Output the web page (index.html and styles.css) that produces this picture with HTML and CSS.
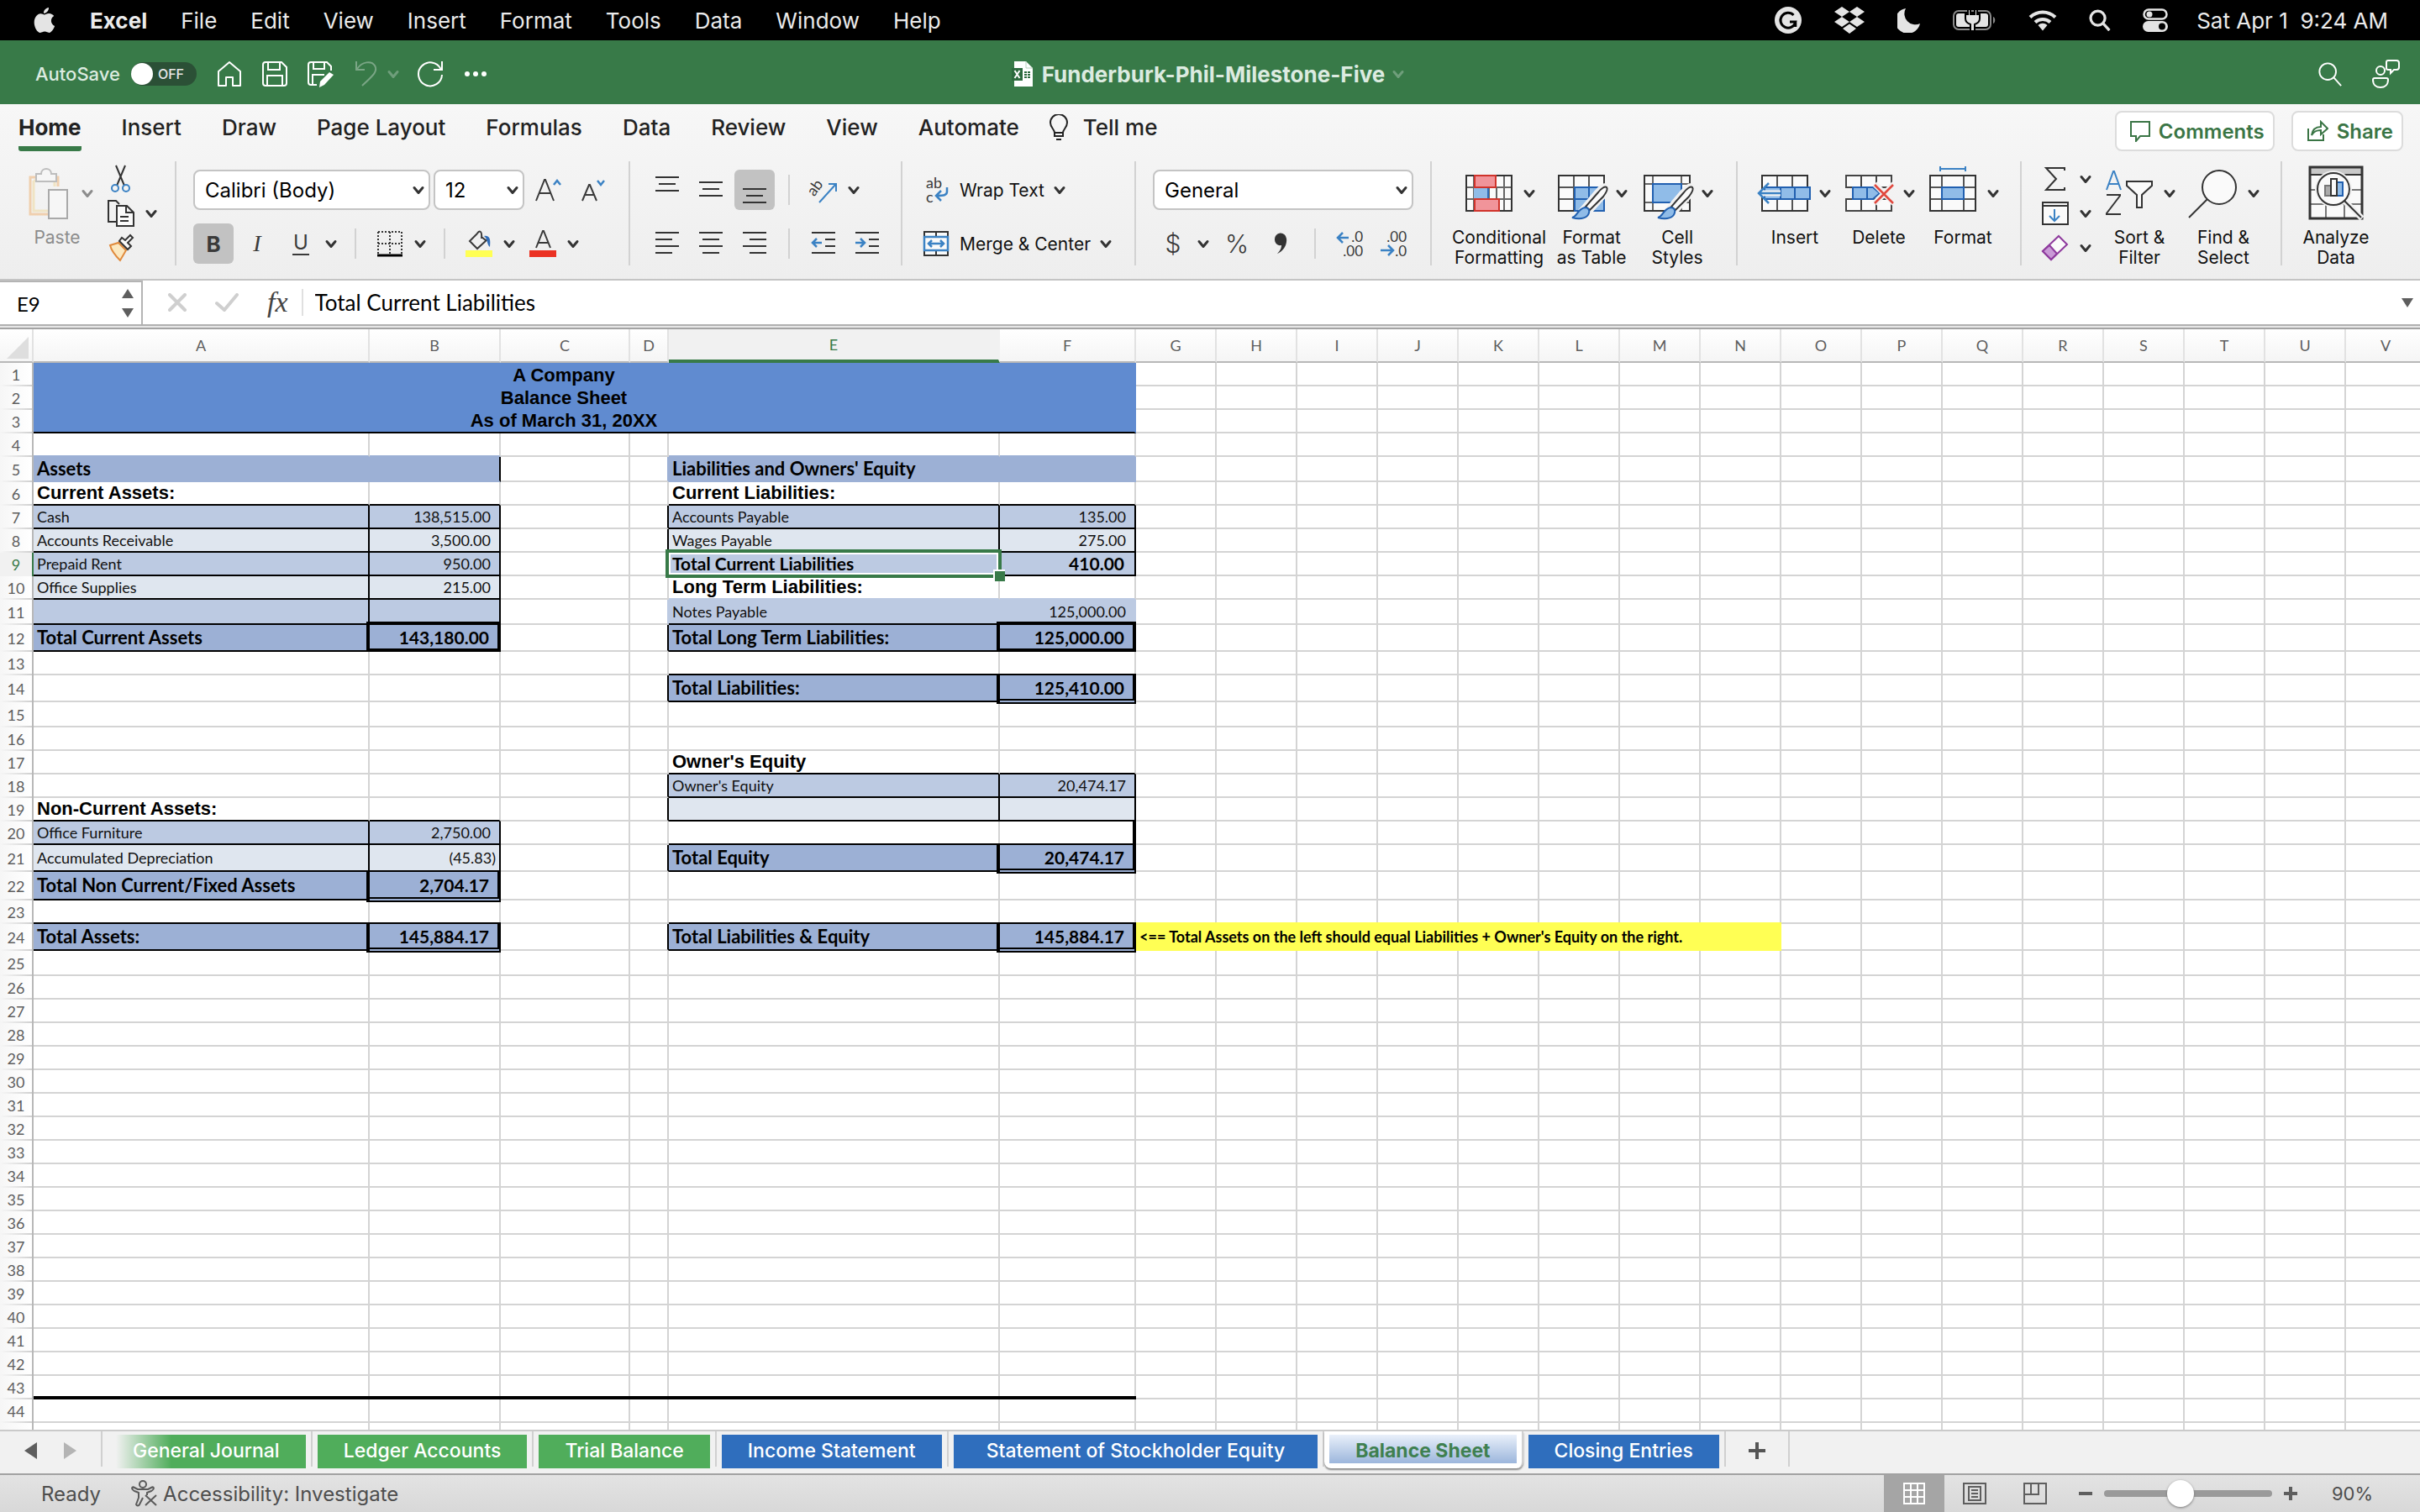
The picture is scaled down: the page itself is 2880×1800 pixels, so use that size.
FILE: index.html
```html
<!DOCTYPE html>
<html lang="en">
<head>
<meta charset="utf-8">
<title>Funderburk-Phil-Milestone-Five</title>
<link rel="stylesheet" href="styles.css">
</head>
<body>
<svg class="defs" aria-hidden="true">
  <symbol id="chev" viewBox="0 0 24 24"><path d="M7 9.500l5 6 5-6" fill="none" stroke="currentColor" stroke-width="3" stroke-linecap="round" stroke-linejoin="round"/></symbol>
  <symbol id="lens" viewBox="0 0 32 32"><circle cx="13" cy="13" r="10.500" fill="none" stroke="currentColor"/><path d="M20.500 20.500L30 31" fill="none" stroke="currentColor"/></symbol>
</svg>

<header class="menubar">
  <button class="plain apple" aria-label="Apple menu"><svg width="26" height="32" viewBox="0 0 26 32"><path fill="#e4e4e4" d="M18 1c.3 3.500-2.800 7-6 6.800C11.600 4.600 14.800 1.200 18 1zM12.800 9.400c1.200 0 3-1.600 5.600-1.500 2.300.1 4.500 1.200 5.800 3.200-4.900 3-4.100 9.800.9 11.900-1 2.900-3.700 7.800-6.600 7.900-2.100 0-2.800-1.300-5.300-1.300-2.400 0-3.300 1.300-5.200 1.300C4.500 31 .7 24.600.7 18.700c0-6.200 3.900-10.500 7.600-10.500 2.100 0 3.500 1.200 4.500 1.200z"/></svg></button>
  <nav class="menus">
    <a href="#" class="app">Excel</a><a href="#">File</a><a href="#">Edit</a><a href="#">View</a><a href="#">Insert</a><a href="#">Format</a><a href="#">Tools</a><a href="#">Data</a><a href="#">Window</a><a href="#">Help</a>
  </nav>
  <div class="status-icons">
    <svg width="32" height="32" viewBox="0 0 32 32"><circle cx="16" cy="16" r="16" fill="#e4e4e4"/><path d="M22.500 10A9 9 0 1 0 24.800 18H18M24.800 17.500V24" fill="none" stroke="#000" stroke-width="3"/></svg>
    <svg width="38" height="34" viewBox="0 0 38 34"><path fill="#e4e4e4" d="M10 1l9 6-9 6-9-6zM28 1l9 6-9 6-9-6zM10 13l9 6-9 6-9-6zM28 13l9 6-9 6-9-6zM19 21.500l8 5.500-8 6-8-6z"/></svg>
    <svg width="28" height="30" viewBox="0 0 28 30"><path fill="#e4e4e4" d="M10 1A15 15 0 1 0 27 19 13 13 0 0 1 10 1z"/></svg>
    <svg width="52" height="26" viewBox="0 0 52 26"><rect x="1" y="2" width="44" height="22" rx="6" fill="none" stroke="#8a8a8a" stroke-width="2"/><rect x="4" y="5" width="38" height="16" rx="3" fill="#e4e4e4"/><path d="M48 9c3 1 3 7 0 8z" fill="#8a8a8a"/><path d="M18 0h3v6h5V0h3v6h3v5c0 4-3 6-6 7v8h-5v-8c-3-1-6-3-6-7V6h3z" fill="#e4e4e4" stroke="#000" stroke-width="2"/></svg>
    <svg width="34" height="26" viewBox="0 0 34 26"><g fill="none" stroke="#e4e4e4" stroke-width="4"><path d="M2 9.500a21.500 21.500 0 0 1 30 0"/><path d="M8 15.500a13 13 0 0 1 18 0"/></g><path fill="#e4e4e4" d="M11.500 19a8 8 0 0 1 11 0L17 25.500z"/></svg>
    <svg class="lens-menu" width="26" height="26"><use href="#lens"/></svg>
    <svg width="30" height="28" viewBox="0 0 30 28"><rect x="1.500" y="1.500" width="27" height="11" rx="5.500" fill="none" stroke="#e4e4e4" stroke-width="2.500"/><circle cx="8" cy="7" r="3.500" fill="#e4e4e4"/><rect x="0" y="15" width="30" height="13" rx="6.500" fill="#e4e4e4"/><circle cx="23" cy="21.500" r="4" fill="#000"/></svg>
  </div>
  <time class="clock">Sat Apr 1  9:24 AM</time>
</header>

<div class="titlebar">
  <div class="quick">
    <label class="autosave">AutoSave <input type="checkbox" role="switch" class="switch-input"><span class="switch"><span class="knob"></span>OFF</span></label>
    <button class="plain" aria-label="Home"><svg width="30" height="32" viewBox="0 0 30 32"><path d="M2 13L15 2l13 11v17h-9V20h-8v10H2z" fill="none" stroke="#fff" stroke-width="2" stroke-linejoin="round"/></svg></button>
    <button class="plain" aria-label="Save"><svg width="30" height="30" viewBox="0 0 30 30"><path d="M4 1h19l6 6v19a3 3 0 0 1-3 3H4a3 3 0 0 1-3-3V4a3 3 0 0 1 3-3zM7 1v9h14V1M6 29V17h18v12" fill="none" stroke="#fff" stroke-width="2"/></svg></button>
    <button class="plain" aria-label="Save as"><svg width="32" height="32" viewBox="0 0 32 32"><path d="M11 29H4a3 3 0 0 1-3-3V5a3 3 0 0 1 3-3h19l5 5v5M7 2v8h13V2M6 29V17h14" fill="none" stroke="#fff" stroke-width="2"/><path d="M26 14l5 3-11 12-6 3 1-7z" fill="#fff"/></svg></button>
    <button class="plain dim" aria-label="Undo"><svg width="28" height="32" viewBox="0 0 28 32"><path d="M2 1v10h10M3 10C9 1 20 0 24 6c4 7-2 12-15 24" fill="none" stroke="currentColor" stroke-width="2"/></svg></button>
    <button class="plain dim tight" aria-label="Undo list"><svg class="chev"><use href="#chev"/></svg></button>
    <button class="plain" aria-label="Redo"><svg width="32" height="32" viewBox="0 0 32 32"><path d="M30 1v10H20M28.500 10A14 14 0 1 0 30 17" fill="none" stroke="#fff" stroke-width="2"/></svg></button>
    <button class="plain" aria-label="More"><svg width="28" height="8" viewBox="0 0 28 8"><g fill="#fff"><circle cx="4" cy="4" r="3"/><circle cx="14" cy="4" r="3"/><circle cx="24" cy="4" r="3"/></g></svg></button>
  </div>
  <div class="doc">
    <svg width="26" height="30" viewBox="0 0 26 30"><path d="M3 0h14l8 8v22H3z" fill="#fff"/><path d="M17 0v8h8" fill="none" stroke="#b9d2bf"/><path d="M0 8h13v15H0z" fill="#2c6a3e"/><path d="M3.500 11l6 9M9.500 11l-6 9" stroke="#fff" stroke-width="2"/><path d="M15 12h3v2h-3zM19 12h3v2h-3zM15 15h3v2h-3zM19 15h3v2h-3zM15 18h3v2h-3zM19 18h3v2h-3z" fill="#2c6a3e"/></svg>
    <h1>Funderburk-Phil-Milestone-Five</h1>
    <svg class="chev dim"><use href="#chev"/></svg>
  </div>
  <div class="account">
    <button class="plain" aria-label="Search"><svg class="lens-title" width="30" height="30"><use href="#lens"/></svg></button>
    <button class="plain" aria-label="Collaborate"><svg width="34" height="34" viewBox="0 0 34 34"><g fill="none" stroke="#fff" stroke-width="2"><circle cx="11" cy="13" r="5"/><path d="M4 22h14a2 2 0 0 1 2 2c0 6-4 9-9 9s-9-3-9-9a2 2 0 0 1 2-2z"/><path d="M20 1h10a3 3 0 0 1 3 3v5a3 3 0 0 1-3 3h-3l-4 4v-4h-3a2 2 0 0 1-2-2V3a2 2 0 0 1 2-2z"/></g></svg></button>
  </div>
</div>

<section class="ribbon">
  <div class="tabrow">
    <nav class="tabs">
      <a href="#" class="on">Home</a><a href="#">Insert</a><a href="#">Draw</a><a href="#">Page Layout</a><a href="#">Formulas</a><a href="#">Data</a><a href="#">Review</a><a href="#">View</a><a href="#">Automate</a>
      <a href="#" class="tell"><svg width="22" height="32" viewBox="0 0 22 32"><path d="M6 22c0-4-5-6-5-12a10 10 0 0 1 20 0c0 6-5 8-5 12zM6 22v4h10v-4M8 30h6" fill="none" stroke="#222" stroke-width="2"/></svg>Tell me</a>
    </nav>
    <button class="pill"><svg width="24" height="26" viewBox="0 0 24 26"><path d="M1 2h22v17H12l-5 6v-6H1z" fill="none" stroke="#3a7545" stroke-width="2"/></svg>Comments</button>
    <button class="pill"><svg width="26" height="26" viewBox="0 0 26 26"><path d="M2 10v14h18v-7M6 18c1-7 5-10 11-10V2l8 8-8 7v-5c-5 0-8 1-11 6z" fill="none" stroke="#3a7545" stroke-width="2"/></svg>Share</button>
  </div>

  <div class="tools">
    <div class="group clip">
      <button class="big off"><span class="pic"><svg class="ico72" viewBox="0 0 72 72"><path d="M49 28V17H16v44h22" fill="none" stroke="#f0cfae" stroke-width="3"/><path d="M20 21h25v7M20 21v36h18" fill="none" stroke="#f0e4c4" stroke-width="3"/><path d="M23 22v-9h6c0-8 12-8 12 0h6v9z" fill="#f6f6f6" stroke="#bdbdbd" stroke-width="2"/><path d="M38 32h22v34H38z" fill="#f6f6f6" stroke="#a9a9a9" stroke-width="2"/></svg><svg class="chev"><use href="#chev"/></svg></span>Paste</button>
      <div class="stack">
        <button class="tool" aria-label="Cut"><svg class="ico" viewBox="0 0 32 32"><path d="M10 0l10 24M21 0L11 24" fill="none" stroke="#333" stroke-width="2"/><circle cx="9" cy="27" r="4" fill="none" stroke="#3b82c4" stroke-width="2"/><circle cx="22" cy="27" r="4" fill="none" stroke="#3b82c4" stroke-width="2"/></svg></button>
        <button class="tool split" aria-label="Copy"><svg class="ico" viewBox="0 0 32 32"><path d="M10 26H1V1h9l4 4" fill="none" stroke="#333" stroke-width="2"/><path d="M11 7h12l8 8v16H11zM22 7v8h9M15 20h10M15 25h10" fill="#fafafa" stroke="#333" stroke-width="2"/></svg><svg class="chev"><use href="#chev"/></svg></button>
        <button class="tool" aria-label="Format painter"><svg class="ico" viewBox="0 0 32 32"><path d="M3 13l10-3 9 9-7 12C11 27 5 21 3 13z" fill="#fbe8c0" stroke="#e08a3c" stroke-width="2"/><path d="M14 8l10 10 4-4-4-4 6-6-3-3-6 6-4-3z" fill="#fafafa" stroke="#333" stroke-width="2"/></svg></button>
      </div>
    </div>

    <div class="group rows">
      <div class="row">
        <label class="pick wide"><select aria-label="Font"><option>Calibri (Body)</option></select><svg class="chev"><use href="#chev"/></svg></label>
        <label class="pick size"><select aria-label="Font size"><option>12</option></select><svg class="chev"><use href="#chev"/></svg></label>
        <button class="tool" aria-label="Increase font size"><svg class="ico" viewBox="0 0 32 32"><path d="M2 29L12 4h1l10 25M6 20h13" fill="none" stroke="#3a3a3a" stroke-width="2"/><path d="M23 10l4-5 4 5" fill="none" stroke="#3b82c4" stroke-width="2.500"/></svg></button>
        <button class="tool" aria-label="Decrease font size"><svg class="ico" viewBox="0 0 32 32"><path d="M5 29l8-19h1l8 19M8 22h11" fill="none" stroke="#3a3a3a" stroke-width="2"/><path d="M23 5l4 5 4-5" fill="none" stroke="#3b82c4" stroke-width="2.500"/></svg></button>
      </div>
      <div class="row">
        <button class="tool on bold">B</button>
        <button class="tool ital">I</button>
        <button class="tool split under"><span class="glyph">U</span><svg class="chev"><use href="#chev"/></svg></button>
        <i class="sep"></i>
        <button class="tool split" aria-label="Borders"><svg class="ico" viewBox="0 0 32 32"><path d="M2 2h28M2 16h28M2 2v26M16 2v26M30 2v26" fill="none" stroke="#333" stroke-width="2" stroke-dasharray="2 2"/><path d="M1 30h30" stroke="#000" stroke-width="3"/></svg><svg class="chev"><use href="#chev"/></svg></button>
        <i class="sep"></i>
        <button class="tool split" aria-label="Fill colour"><svg class="ico" viewBox="0 0 32 32"><path d="M14 4L5 13l9 9 12-11M14 4c2-4 6-4 5 6M19 8l5 4" fill="none" stroke="#3a3a3a" stroke-width="2"/><path d="M22 7c7-1 8 4 7 13-4-3-2-9-7-13z" fill="#2f6cb8"/><path d="M0 24h32v8H0z" fill="#ffff54"/></svg><svg class="chev"><use href="#chev"/></svg></button>
        <button class="tool split" aria-label="Font colour"><svg class="ico" viewBox="0 0 32 32"><path d="M8 21L16 1h1l8 20M11 15h11" fill="none" stroke="#3a3a3a" stroke-width="2"/><path d="M0 24h32v8H0z" fill="#eb3223"/></svg><svg class="chev"><use href="#chev"/></svg></button>
      </div>
    </div>

    <div class="group rows">
      <div class="row">
        <button class="tool" aria-label="Top align"><svg class="ico" viewBox="0 0 32 32"><path d="M2 1h28M6 9h20M2 17h28" stroke="#333" stroke-width="2"/></svg></button>
        <button class="tool" aria-label="Middle align"><svg class="ico" viewBox="0 0 32 32"><path d="M2 7h28M6 15h20M2 23h28" stroke="#333" stroke-width="2"/></svg></button>
        <button class="tool on" aria-label="Bottom align"><svg class="ico" viewBox="0 0 32 32"><path d="M2 15h28M6 23h20M2 31h28" stroke="#333" stroke-width="2"/></svg></button>
        <i class="sep"></i>
        <button class="tool split" aria-label="Orientation"><svg class="ico" viewBox="0 0 32 32"><text x="0" y="21" transform="rotate(-54 6 18)" class="ab">ab</text><path d="M11 31L30 10M22 9h9v9" fill="none" stroke="#3b82c4" stroke-width="2"/></svg><svg class="chev"><use href="#chev"/></svg></button>
      </div>
      <div class="row">
        <button class="tool" aria-label="Align left"><svg class="ico" viewBox="0 0 32 32"><path d="M2 3h28M2 11h20M2 19h28M2 27h20" stroke="#333" stroke-width="2"/></svg></button>
        <button class="tool" aria-label="Centre"><svg class="ico" viewBox="0 0 32 32"><path d="M2 3h28M6 11h20M2 19h28M6 27h20" stroke="#333" stroke-width="2"/></svg></button>
        <button class="tool" aria-label="Align right"><svg class="ico" viewBox="0 0 32 32"><path d="M2 3h28M10 11h20M2 19h28M10 27h20" stroke="#333" stroke-width="2"/></svg></button>
        <i class="sep"></i>
        <button class="tool" aria-label="Decrease indent"><svg class="ico" viewBox="0 0 32 32"><path d="M2 3h28M18 11h12M18 19h12M2 27h28" stroke="#333" stroke-width="2"/><path d="M14 15H3M8 10l-5 5 5 5" fill="none" stroke="#3b82c4" stroke-width="2.500"/></svg></button>
        <button class="tool" aria-label="Increase indent"><svg class="ico" viewBox="0 0 32 32"><path d="M2 3h28M18 11h12M18 19h12M2 27h28" stroke="#333" stroke-width="2"/><path d="M2 15h11M8 10l5 5-5 5" fill="none" stroke="#3b82c4" stroke-width="2.500"/></svg></button>
      </div>
    </div>

    <div class="group rows">
      <div class="row">
        <button class="tool text"><svg class="ico" viewBox="0 0 32 32"><text x="4" y="14" class="ab">ab</text><text x="4" y="31" class="ab">c</text><path d="M29 13v5c0 4-3 5-12 5M22 17l-6 6 6 6" fill="none" stroke="#3b82c4" stroke-width="2.500"/></svg>Wrap Text<svg class="chev"><use href="#chev"/></svg></button>
      </div>
      <div class="row">
        <button class="tool text"><svg class="ico" viewBox="0 0 32 32"><path d="M2 2h28v28H2zM16 2v6M16 24v6" fill="#fafafa" stroke="#333" stroke-width="2"/><path d="M2 8h28v16H2zM7 16h18M11 12l-4 4 4 4M21 12l4 4-4 4" fill="#fafafa" stroke="#3b82c4" stroke-width="2.500"/></svg>Merge &amp; Center<svg class="chev"><use href="#chev"/></svg></button>
      </div>
    </div>

    <div class="group rows">
      <div class="row">
        <label class="pick number"><select aria-label="Number format"><option>General</option></select><svg class="chev"><use href="#chev"/></svg></label>
      </div>
      <div class="row">
        <button class="tool split sym"><span class="glyph">$</span><svg class="chev"><use href="#chev"/></svg></button>
        <button class="tool sym">%</button>
        <button class="tool" aria-label="Comma style"><svg class="ico" viewBox="0 0 32 32"><path d="M9 11a7 7 0 0 1 14-1c1 8-4 15-11 18 4-4 5-7 5-10-5 1-8-3-8-7z" fill="#333"/></svg></button>
        <i class="sep"></i>
        <button class="tool" aria-label="Increase decimal"><svg class="ico" viewBox="0 0 32 32"><text x="32" y="14" class="dec">.0</text><text x="32" y="31" class="dec">.00</text><path d="M15 9H2M8 3L2 9l6 6" fill="none" stroke="#3b82c4" stroke-width="2.500"/></svg></button>
        <button class="tool" aria-label="Decrease decimal"><svg class="ico" viewBox="0 0 32 32"><text x="32" y="14" class="dec">.00</text><text x="32" y="31" class="dec">.0</text><path d="M1 24h15M10 18l6 6-6 6" fill="none" stroke="#3b82c4" stroke-width="2.500"/></svg></button>
      </div>
    </div>

    <div class="group styles">
      <button class="big"><span class="pic"><svg class="ico72" viewBox="0 0 72 72"><path d="M9 15h54v42H9zM18 15v42M54 15v42M36 29v14M45 29v14M9 29h54M9 43h54" fill="#fafafa" stroke="#666" stroke-width="2"/><path d="M9 15h54v42H9z" fill="none" stroke="#333" stroke-width="2"/><path d="M18 29h17v14H18z" fill="#90bce8"/><path d="M35 29v14" stroke="#2f6cb8" stroke-width="2"/><path d="M19 15h25v14H19zM19 43h29v14H19z" fill="#f1949a" stroke="#d0332b" stroke-width="2"/></svg><svg class="chev"><use href="#chev"/></svg></span>Conditional<br>Formatting</button>
      <button class="big"><span class="pic"><svg class="ico72" viewBox="0 0 72 72"><path d="M9 15h54v42H9zM27 15v42M45 15v42M9 29h54M9 43h54" fill="#fafafa" stroke="#555" stroke-width="2"/><path d="M9 15h54v42H9z" fill="none" stroke="#333" stroke-width="2"/><path d="M28 29h35v28H28zM45 29v28M28 43h35" fill="#90bce8" stroke="#2160b0" stroke-width="2"/><path d="M65 27c4 2 1 8-3 13L45 59l-8-4 17-20c4-5 8-8 11-8z" fill="#fafafa" stroke="#f2f2f2" stroke-width="6"/><path d="M66 29c2 2-1 7-4 11L46 56l-5-4 15-17c3-4 8-8 10-6z" fill="#fafafa" stroke="#333" stroke-width="2"/><path d="M40 53c4 0 6 3 5 6-1 6-9 9-20 6 6-1 6-10 15-12z" fill="#90bce8" stroke="#2160b0" stroke-width="2"/></svg><svg class="chev"><use href="#chev"/></svg></span>Format<br>as Table</button>
      <button class="big"><span class="pic"><svg class="ico72" viewBox="0 0 72 72"><path d="M9 15h54v42H9zM19 15v42M53 15v42M9 25h54M9 47h54" fill="#fafafa" stroke="#666" stroke-width="2"/><path d="M9 15h54v42H9z" fill="none" stroke="#333" stroke-width="2"/><path d="M19 25h34v22H19z" fill="#90bce8" stroke="#2160b0" stroke-width="2"/><path d="M65 27c4 2 1 8-3 13L45 59l-8-4 17-20c4-5 8-8 11-8z" fill="#fafafa" stroke="#f2f2f2" stroke-width="6"/><path d="M66 29c2 2-1 7-4 11L46 56l-5-4 15-17c3-4 8-8 10-6z" fill="#fafafa" stroke="#333" stroke-width="2"/><path d="M40 53c4 0 6 3 5 6-1 6-9 9-20 6 6-1 6-10 15-12z" fill="#90bce8" stroke="#2160b0" stroke-width="2"/></svg><svg class="chev"><use href="#chev"/></svg></span>Cell<br>Styles</button>
    </div>

    <div class="group">
      <button class="big"><span class="pic"><svg class="ico72" viewBox="0 0 72 72"><path d="M9 15h54v42H9zM27 15v42M45 15v42" fill="#fafafa" stroke="#555" stroke-width="2"/><path d="M9 15h54v42H9z" fill="none" stroke="#333" stroke-width="2"/><path d="M12 29h54v14H12zM31 29v14M48 29v14" fill="#90bce8" stroke="#2160b0" stroke-width="2"/><path d="M5 36h26" stroke="#f2f2f2" stroke-width="7"/><path d="M5 36h26M17 24L5 36l12 12" fill="none" stroke="#3b82c4" stroke-width="2.500"/></svg><svg class="chev"><use href="#chev"/></svg></span>Insert</button>
      <button class="big"><span class="pic"><svg class="ico72" viewBox="0 0 72 72"><path d="M9 15h54v14H9zM9 43h54v14H9zM27 15v14M45 15v14M27 43v14M45 43v14" fill="#fafafa" stroke="#444" stroke-width="2"/><path d="M17 29h24l8 7-8 7H17zM34 29v14" fill="#90bce8" stroke="#2160b0" stroke-width="2"/><path d="M43 25l23 23M66 25L43 48" stroke="#f2f2f2" stroke-width="7"/><path d="M43 26l22 22M65 26L43 48" stroke="#e0483e" stroke-width="2.500"/></svg><svg class="chev"><use href="#chev"/></svg></span>Delete</button>
      <button class="big"><span class="pic"><svg class="ico72" viewBox="0 0 72 72"><path d="M9 15h54v42H9zM23 15v42M49 15v42M9 29h54M9 43h54" fill="#fafafa" stroke="#555" stroke-width="2"/><path d="M9 15h54v42H9z" fill="none" stroke="#333" stroke-width="2"/><path d="M23 29h26v14H23z" fill="#90bce8" stroke="#2160b0" stroke-width="2"/><path d="M21 4v6M51 4v6M21 7h30" stroke="#3b82c4" stroke-width="2"/></svg><svg class="chev"><use href="#chev"/></svg></span>Format</button>
    </div>

    <div class="group edit">
      <div class="stack">
        <button class="tool split" aria-label="AutoSum"><svg class="ico" viewBox="0 0 32 32"><path d="M27 6V3H5l12 13L5 29h22v-3" fill="none" stroke="#333" stroke-width="2"/></svg><svg class="chev"><use href="#chev"/></svg></button>
        <button class="tool split" aria-label="Fill"><svg class="ico" viewBox="0 0 32 32"><path d="M1 3h30v26H1zM1 7h30" fill="#fafafa" stroke="#333" stroke-width="2"/><path d="M15 11v14M9 19l6 6 6-6" fill="none" stroke="#3b82c4" stroke-width="2"/></svg><svg class="chev"><use href="#chev"/></svg></button>
        <button class="tool split" aria-label="Clear"><svg class="ico" viewBox="0 0 32 32"><path d="M20 2l10 10-19 18L1 20z" fill="#fafafa" stroke="#8e3a9d" stroke-width="2"/><path d="M9 13l9 10-7 7L1 20z" fill="#c99ad6" stroke="#8e3a9d" stroke-width="2"/></svg><svg class="chev"><use href="#chev"/></svg></button>
      </div>
      <button class="big"><span class="pic"><svg class="ico72" viewBox="0 0 72 72"><path d="M9 32l8-22h1l8 22M12 25h11" fill="none" stroke="#3b82c4" stroke-width="2"/><path d="M9 38h16v1L9 60v1h17" fill="none" stroke="#333" stroke-width="2"/><path d="M33 22h30v5L51 38v15h-6V38L33 27z" fill="#fafafa" stroke="#333" stroke-width="2"/></svg><svg class="chev"><use href="#chev"/></svg></span>Sort &amp;<br>Filter</button>
      <button class="big"><span class="pic"><svg class="ico72" viewBox="0 0 72 72"><circle cx="43" cy="29" r="20" fill="#fafafa" stroke="#333" stroke-width="2"/><path d="M29 43L7 65" stroke="#333" stroke-width="2"/></svg><svg class="chev"><use href="#chev"/></svg></span>Find &amp;<br>Select</button>
    </div>

    <div class="group edit">
      <button class="big"><span class="pic"><svg class="ico72" viewBox="0 0 72 72"><path d="M5 5h62v61H5zM24 14v52M46 14v52M5 32h62M5 49h62" fill="#fafafa" stroke="#777" stroke-width="2"/><path d="M5 5h62v9H5z" fill="#c8c8c8" stroke="#333" stroke-width="2"/><path d="M5 5h62v61H5z" fill="none" stroke="#333" stroke-width="3"/><circle cx="33" cy="31" r="22" fill="#f2f2f2"/><path d="M47 46l20 20" stroke="#f2f2f2" stroke-width="7"/><circle cx="33" cy="31" r="19" fill="#fafafa" stroke="#333" stroke-width="2"/><path d="M46 45l20 20" stroke="#333" stroke-width="2"/><path d="M23 27h7v12h-7z" fill="#ababab" stroke="#777" stroke-width="2"/><path d="M37 23h7v16h-7z" fill="#90bce8" stroke="#2160b0" stroke-width="2"/><path d="M30 19h7v20h-7z" fill="#fafafa" stroke="#333" stroke-width="2"/></svg></span>Analyze<br>Data</button>
    </div>
  </div>
</section>

<div class="formulabar">
  <div class="namebox"><input aria-label="Name box" value="E9"><svg width="16" height="34" viewBox="0 0 16 34"><path d="M1 11L8 0l7 11zM1 23l7 11 7-11z" fill="#5e5e5e"/></svg></div>
  <button class="plain" aria-label="Cancel"><svg width="22" height="22" viewBox="0 0 22 22"><path d="M2 2l18 18M20 2L2 20" stroke="#cfcfcf" stroke-width="4" stroke-linecap="round"/></svg></button>
  <button class="plain" aria-label="Enter"><svg width="28" height="22" viewBox="0 0 28 22"><path d="M2 12l9 8L26 2" fill="none" stroke="#cfcfcf" stroke-width="4" stroke-linecap="round"/></svg></button>
  <button class="plain fx" aria-label="Insert function">fx</button>
  <input class="formula" aria-label="Formula" value="Total Current Liabilities">
  <button class="plain expand" aria-label="Expand formula bar"><svg width="14" height="11" viewBox="0 0 14 11"><path d="M0 0h14L7 11z" fill="#5e5e5e"/></svg></button>
</div>

<main class="sheet">
<table>
<colgroup><col class="c-head"><col class="c-a"><col class="c-b"><col class="c-c"><col class="c-d"><col class="c-e"><col class="c-f"><col class="c-n" span="16"></colgroup>
<thead><tr><th class="corner"><svg width="26" height="26" viewBox="0 0 26 26"><path d="M26 0v26H0z" fill="#dedede"/></svg></th><th>A</th><th>B</th><th>C</th><th>D</th><th class="cur">E</th><th>F</th><th>G</th><th>H</th><th>I</th><th>J</th><th>K</th><th>L</th><th>M</th><th>N</th><th>O</th><th>P</th><th>Q</th><th>R</th><th>S</th><th>T</th><th>U</th><th>V</th></tr></thead>
<tbody>
<tr><th scope="row">1</th><td class="title" colspan="6" rowspan="3">A Company<br>Balance Sheet<br>As of March 31, 20XX</td><td class="rest" colspan="16"></td></tr>
<tr><th scope="row">2</th><td class="rest" colspan="16"></td></tr>
<tr><th scope="row">3</th><td class="rest" colspan="16"></td></tr>
<tr><th scope="row">4</th><td class="bs"></td><td class="bs"></td><td></td><td></td><td class="bs"></td><td class="bs"></td><td class="rest" colspan="16"></td></tr>
<tr class="h30"><th scope="row">5</th><td class="sec bs rk" colspan="2">Assets</td><td></td><td class="rs"></td><td class="sec bs rs" colspan="2">Liabilities and Owners' Equity</td><td class="rest" colspan="16"></td></tr>
<tr><th scope="row">6</th><td class="arial bk">Current Assets:</td><td class="bk"></td><td></td><td></td><td class="arial bk">Current Liabilities:</td><td class="bk"></td><td class="rest" colspan="16"></td></tr>
<tr><th scope="row">7</th><td class="dk box">Cash</td><td class="dk box num">138,515.00</td><td></td><td class="rk"></td><td class="dk box">Accounts Payable</td><td class="dk box num">135.00</td><td class="rest" colspan="16"></td></tr>
<tr><th scope="row">8</th><td class="lt box">Accounts Receivable</td><td class="lt box num">3,500.00</td><td></td><td class="rk"></td><td class="lt box">Wages Payable</td><td class="lt box num">275.00</td><td class="rest" colspan="16"></td></tr>
<tr><th scope="row" class="cur">9</th><td class="dk box">Prepaid Rent</td><td class="dk box num">950.00</td><td></td><td class="rk"></td><td class="dk box strong active">Total Current Liabilities</td><td class="dk box num strong">410.00</td><td class="rest" colspan="16"></td></tr>
<tr><th scope="row">10</th><td class="lt box">Office Supplies</td><td class="lt box num">215.00</td><td></td><td></td><td class="arial bd">Long Term Liabilities:</td><td class="bd"></td><td class="rest" colspan="16"></td></tr>
<tr class="h30"><th scope="row">11</th><td class="dk box"></td><td class="dk box"></td><td></td><td class="rd"></td><td class="dk bk rd">Notes Payable</td><td class="dk bk rd num">125,000.00</td><td class="rest" colspan="16"></td></tr>
<tr class="h32"><th scope="row">12</th><td class="sec box">Total Current Assets</td><td class="sec box num thick">143,180.00</td><td></td><td class="rk"></td><td class="sec box">Total Long Term Liabilities:</td><td class="sec box num thick">125,000.00</td><td class="rest" colspan="16"></td></tr>
<tr><th scope="row">13</th><td></td><td></td><td></td><td></td><td class="bk"></td><td class="bk"></td><td class="rest" colspan="16"></td></tr>
<tr class="h32"><th scope="row">14</th><td></td><td></td><td></td><td class="rk"></td><td class="sec box">Total Liabilities:</td><td class="sec num dbl">125,410.00</td><td class="rest" colspan="16"></td></tr>
<tr class="h30"><th scope="row">15</th><td></td><td></td><td></td><td></td><td></td><td></td><td class="rest" colspan="16"></td></tr>
<tr><th scope="row">16</th><td></td><td></td><td></td><td></td><td></td><td></td><td class="rest" colspan="16"></td></tr>
<tr><th scope="row">17</th><td></td><td></td><td></td><td></td><td class="arial bk">Owner's Equity</td><td class="bk"></td><td class="rest" colspan="16"></td></tr>
<tr><th scope="row">18</th><td></td><td></td><td></td><td class="rk"></td><td class="dk box">Owner's Equity</td><td class="dk box num">20,474.17</td><td class="rest" colspan="16"></td></tr>
<tr><th scope="row">19</th><td class="arial bk">Non-Current Assets:</td><td class="bk"></td><td></td><td class="rk"></td><td class="lt box"></td><td class="lt box"></td><td class="rest" colspan="16"></td></tr>
<tr><th scope="row">20</th><td class="dk box">Office Furniture</td><td class="dk box num">2,750.00</td><td></td><td></td><td class="bk"></td><td class="bk rk rthick"></td><td class="rest" colspan="16"></td></tr>
<tr class="h32"><th scope="row">21</th><td class="lt box">Accumulated Depreciation</td><td class="lt box num neg">(45.83)</td><td></td><td class="rk"></td><td class="sec box">Total Equity</td><td class="sec num dbl">20,474.17</td><td class="rest" colspan="16"></td></tr>
<tr class="h34"><th scope="row">22</th><td class="sec box">Total Non Current/Fixed Assets</td><td class="sec num dbl">2,704.17</td><td></td><td></td><td></td><td></td><td class="rest" colspan="16"></td></tr>
<tr><th scope="row">23</th><td class="bk"></td><td class="bk"></td><td></td><td></td><td class="bk"></td><td class="bk"></td><td class="rest by" colspan="8"></td><td class="rest" colspan="8"></td></tr>
<tr class="h32"><th scope="row">24</th><td class="sec box">Total Assets:</td><td class="sec num dbl">145,884.17</td><td></td><td class="rk"></td><td class="sec box">Total Liabilities &amp; Equity</td><td class="sec num dbl">145,884.17</td><td class="note" colspan="8">&lt;== Total Assets on the left should equal Liabilities + Owner's Equity on the right.</td><td class="rest" colspan="8"></td></tr>
<tr class="h30"><th scope="row">25</th><td></td><td></td><td></td><td></td><td></td><td></td><td class="rest" colspan="16"></td></tr>
<tr><th scope="row">26</th><td></td><td></td><td></td><td></td><td></td><td></td><td class="rest" colspan="16"></td></tr>
<tr><th scope="row">27</th><td></td><td></td><td></td><td></td><td></td><td></td><td class="rest" colspan="16"></td></tr>
<tr><th scope="row">28</th><td></td><td></td><td></td><td></td><td></td><td></td><td class="rest" colspan="16"></td></tr>
<tr><th scope="row">29</th><td></td><td></td><td></td><td></td><td></td><td></td><td class="rest" colspan="16"></td></tr>
<tr><th scope="row">30</th><td></td><td></td><td></td><td></td><td></td><td></td><td class="rest" colspan="16"></td></tr>
<tr><th scope="row">31</th><td></td><td></td><td></td><td></td><td></td><td></td><td class="rest" colspan="16"></td></tr>
<tr><th scope="row">32</th><td></td><td></td><td></td><td></td><td></td><td></td><td class="rest" colspan="16"></td></tr>
<tr><th scope="row">33</th><td></td><td></td><td></td><td></td><td></td><td></td><td class="rest" colspan="16"></td></tr>
<tr><th scope="row">34</th><td></td><td></td><td></td><td></td><td></td><td></td><td class="rest" colspan="16"></td></tr>
<tr><th scope="row">35</th><td></td><td></td><td></td><td></td><td></td><td></td><td class="rest" colspan="16"></td></tr>
<tr><th scope="row">36</th><td></td><td></td><td></td><td></td><td></td><td></td><td class="rest" colspan="16"></td></tr>
<tr><th scope="row">37</th><td></td><td></td><td></td><td></td><td></td><td></td><td class="rest" colspan="16"></td></tr>
<tr><th scope="row">38</th><td></td><td></td><td></td><td></td><td></td><td></td><td class="rest" colspan="16"></td></tr>
<tr><th scope="row">39</th><td></td><td></td><td></td><td></td><td></td><td></td><td class="rest" colspan="16"></td></tr>
<tr><th scope="row">40</th><td></td><td></td><td></td><td></td><td></td><td></td><td class="rest" colspan="16"></td></tr>
<tr><th scope="row">41</th><td></td><td></td><td></td><td></td><td></td><td></td><td class="rest" colspan="16"></td></tr>
<tr><th scope="row">42</th><td></td><td></td><td></td><td></td><td></td><td></td><td class="rest" colspan="16"></td></tr>
<tr class="endline"><th scope="row">43</th><td></td><td></td><td></td><td></td><td></td><td></td><td class="rest" colspan="16"></td></tr>
<tr><th scope="row">44</th><td></td><td></td><td></td><td></td><td></td><td></td><td class="rest" colspan="16"></td></tr>
<tr><th scope="row">45</th><td></td><td></td><td></td><td></td><td></td><td></td><td class="rest" colspan="16"></td></tr>
</tbody>
</table>
</main>

<nav class="sheets">
  <div class="arrows">
    <button class="plain" aria-label="Previous sheets"><svg width="16" height="20" viewBox="0 0 16 20"><path d="M15 0v20L0 10z" fill="#5e5e5e"/></svg></button>
    <button class="plain" aria-label="Next sheets"><svg width="16" height="20" viewBox="0 0 16 20"><path d="M1 0v20l15-10z" fill="#b4b4b4"/></svg></button>
  </div>
  <a href="#" class="st green first"><span>General Journal</span></a>
  <a href="#" class="st green"><span>Ledger Accounts</span></a>
  <a href="#" class="st green"><span>Trial Balance</span></a>
  <a href="#" class="st blue"><span>Income Statement</span></a>
  <a href="#" class="st blue long"><span>Statement of Stockholder Equity</span></a>
  <a href="#" class="st current"><span>Balance Sheet</span></a>
  <a href="#" class="st blue"><span>Closing Entries</span></a>
  <button class="plain add" aria-label="New sheet"><svg width="20" height="20" viewBox="0 0 20 20"><path d="M0 10h20M10 0v20" stroke="#555" stroke-width="4"/></svg></button>
</nav>

<footer class="statusbar">
  <span class="ready">Ready</span>
  <button class="plain access"><svg width="32" height="32" viewBox="0 0 32 32"><g fill="none" stroke="#5a5a5a" stroke-width="2" stroke-linejoin="round"><circle cx="14" cy="5" r="4"/><path d="M2 8c-2 2 0 4 2 5l5 2v6L6 29c1 2 3 2 4 0l4-8M26 8c2 2 0 4-2 5l-5 2v3M2 8l6 3h12l6-3"/><path d="M17 18l13 12M30 18L17 30"/></g></svg>Accessibility: Investigate</button>
  <div class="views">
    <button class="view on" aria-label="Normal"><svg width="28" height="28" viewBox="0 0 28 28"><path d="M2 2h24v24H2zM10 2v24M18 2v24M2 10h24M2 18h24" fill="none" stroke="#fff" stroke-width="2"/></svg></button>
    <button class="view" aria-label="Page layout"><svg width="28" height="28" viewBox="0 0 28 28"><path d="M1 2h26v24H1zM7 6h14v16H7zM10 10h8M10 14h8M10 18h8" fill="none" stroke="#5e5e5e" stroke-width="2"/></svg></button>
    <button class="view" aria-label="Page break preview"><svg width="28" height="28" viewBox="0 0 28 28"><path d="M1 2h26v24H1zM1 15h17V2M9 2v13" fill="none" stroke="#5e5e5e" stroke-width="2"/></svg></button>
  </div>
  <button class="plain" aria-label="Zoom out"><svg width="16" height="16" viewBox="0 0 16 16"><path d="M0 8h16" stroke="#5e5e5e" stroke-width="4"/></svg></button>
  <input type="range" class="zoom" aria-label="Zoom" min="0" max="180" value="81">
  <button class="plain" aria-label="Zoom in"><svg width="16" height="16" viewBox="0 0 16 16"><path d="M0 8h16M8 0v16" stroke="#5e5e5e" stroke-width="4"/></svg></button>
  <output class="percent">90%</output>
</footer>
</body>
</html>
```
FILE: styles.css
```css
:root {
  --ui: Inter, "Liberation Sans", sans-serif;
  --cell: Lato, "Liberation Sans", sans-serif;
  --green: #387a48;
  --grid: #d4d4d4;
  --sec: #9cb0d5;
  --dk: #bccae2;
  --lt: #dfe6ef;
}

* { box-sizing: border-box; }

body {
  margin: 0;
  height: 100vh;
  display: flex;
  flex-direction: column;
  overflow: hidden;
  background: #fff;
  font-family: var(--ui);
  font-size: 24px;
  color: #222;
}

.defs { position: absolute; width: 0; height: 0; }
svg { display: block; flex: none; }
a { color: inherit; text-decoration: none; }
button, input, select { font: inherit; color: inherit; margin: 0; }
button { border: 0; padding: 0; background: none; }
.plain { display: flex; align-items: center; }
.chev { width: 24px; height: 24px; color: #333; }
.dim { color: #7ba686; }

/* system menu bar */
.menubar {
  height: 48px;
  display: flex;
  align-items: center;
  background: #000;
  color: #ebebeb;
  padding: 0 38px 0 40px;
}
.menus { display: flex; gap: 40px; margin-left: 41px; font-size: 26px; }
.menus .app { font-weight: 700; }
.status-icons { display: flex; align-items: center; gap: 38px; margin-left: auto; }
.lens-menu { color: #e4e4e4; stroke-width: 4; }
.clock { font-size: 26px; white-space: pre; margin-left: 34px; }

/* document title bar */
.titlebar {
  height: 76px;
  display: grid;
  grid-template-columns: 1fr auto 1fr;
  align-items: center;
  background: var(--green);
  color: #dcebe0;
  padding: 4px 24px 0;
}
.quick { display: flex; align-items: center; gap: 24px; padding-left: 18px; }
.quick .tight { margin-left: -18px; margin-right: -8px; }
.quick .dim .chev { color: #6f9e7b; }
.autosave { display: flex; align-items: center; gap: 13px; font-size: 22px; font-weight: 500; }
.switch-input { position: absolute; opacity: 0; }
.switch {
  display: flex;
  align-items: center;
  gap: 6px;
  width: 78px;
  height: 28px;
  border-radius: 14px;
  background: #2b5036;
  font-size: 16px;
  color: #e8e8e8;
}
.knob { width: 26px; height: 26px; border-radius: 50%; background: #fff; }
.doc { display: flex; align-items: center; gap: 10px; }
.doc h1 { margin: 0; font-size: 26px; font-weight: 700; }
.doc .chev { color: #6f9e7b; margin-left: -6px; }
.account { display: flex; align-items: center; gap: 34px; justify-content: flex-end; }
.lens-title { color: #fff; stroke-width: 2; }

/* ribbon */
.ribbon { background: linear-gradient(#f7f7f7, #eee); border-bottom: 2px solid #c4c4c4; }
.tabrow { display: flex; height: 64px; padding: 0 20px 0 22px; gap: 20px; align-items: flex-start; }
.tabs { display: flex; gap: 48px; margin-right: auto; font-size: 26px; line-height: 32px; padding-top: 12px; font-weight: 500; }
.tabs a { height: 44px; white-space: nowrap; }
.tabs .on { font-weight: 700; border-bottom: 6px solid var(--green); border-radius: 3px; }
.tabs .tell { display: flex; gap: 18px; margin-left: -12px; }
.pill {
  display: flex;
  align-items: center;
  gap: 10px;
  height: 48px;
  margin-top: 8px;
  padding: 0 10px 0 16px;
  background: #fff;
  border: 2px solid #dcdcdc;
  border-radius: 8px;
  color: #3a7545;
  font-weight: 600;
}
.tools {
  display: grid;
  grid-template-columns: 210px 540px 324px 278px 352px 364px 338px 310px 1fr;
  padding: 4px 0 16px;
}
.group { display: flex; gap: 4px; height: 124px; padding-left: 20px; border-right: 2px solid #d2d2d2; color: #111; }
.group:last-child { border-right: 0; }
.group.edit { padding-left: 16px; }
.group.styles { padding-left: 24px; gap: 6px; }
.rows { flex-direction: column; gap: 16px; padding-top: 10px; }
.group.rows { gap: 16px; }
.row { display: flex; align-items: center; gap: 4px; height: 48px; }
.stack { display: flex; flex-direction: column; }
.stack .tool { height: 44px; }
.tool { display: flex; align-items: center; justify-content: center; width: 48px; height: 48px; font-size: 28px; border-radius: 6px; color: #3a3a3a; }
.tool.split { width: 72px; padding-left: 8px; justify-content: space-between; }
.tool.text { width: auto; font-size: 21px; color: #111; }
.tool.text .ico { margin-left: 4px; margin-right: 12px; }
.tool.text .chev { margin-left: 6px; }
.tool.on { background: #c2c2c2; }
.tool.bold { font-weight: 700; font-size: 26px; }
.tool.ital { font-family: "Liberation Serif", serif; font-style: italic; }
.glyph { width: 32px; text-align: center; }
.under .glyph { border-bottom: 2px solid #3a3a3a; width: 20px; margin-left: 6px; font-size: 24px; line-height: 26px; }
.sym { font-size: 30px; font-weight: 300; }
.ico { width: 32px; height: 32px; overflow: visible; }
.ab { font: 18px var(--cell); fill: #3a3a3a; }
.dec { font: 17px var(--cell); fill: #3a3a3a; text-anchor: end; }
.sep { width: 2px; height: 36px; margin: 0 12px; background: #d2d2d2; }
.big { display: flex; flex-direction: column; align-items: center; min-width: 96px; padding-top: 2px; font-size: 21px; line-height: 24px; text-align: center; }
.pic { display: flex; align-items: center; margin-bottom: 5px; }
.ico72 { width: 72px; height: 72px; }
.off, .off .chev { color: #8c8c8c; }
.pick { position: relative; display: flex; height: 48px; }
.pick select {
  appearance: none;
  width: 100%;
  padding: 0 12px;
  background: #fff;
  border: 2px solid #c4c4c4;
  border-radius: 8px;
  font-size: 24px;
  color: #000;
}
.pick .chev { position: absolute; right: 2px; top: 12px; pointer-events: none; }
.pick.wide { width: 282px; }
.pick.size { width: 108px; }
.pick.number { width: 310px; }

/* formula bar */
.formulabar { display: flex; align-items: center; height: 58px; padding-bottom: 6px; background: linear-gradient(#fff 52px, #b0b0b0 52px, #b0b0b0 54px, #e6e6e6 54px, #e6e6e6 56px, #a4a4a4 56px); }
.formulabar input { border: 0; outline: 0; background: none; padding: 0; font-family: var(--cell); color: #000; }
.namebox { display: flex; align-items: center; width: 170px; height: 52px; padding: 0 8px 0 20px; margin-right: 30px; border: solid #b4b4b4; border-width: 2px 2px 0 0; }
.namebox input { flex: 1; min-width: 0; font-size: 24px; }
.formulabar .plain { margin-right: 34px; }
.formulabar .fx { font: italic 34px "Liberation Serif", serif; color: #444; margin-right: 16px; }
.formulabar .formula { flex: 1; height: 32px; padding-left: 14px; border-left: 2px solid #e0e0e0; font-size: 26px; }
.formulabar .expand { margin-right: 8px; }

/* grid */
.sheet { flex: 1; min-height: 0; overflow: hidden; border-bottom: 2px solid #cacaca; }
table { table-layout: fixed; width: 100%; border-spacing: 0; font-family: var(--cell); font-size: 18px; line-height: 24px; color: #111; }
.c-head { width: 40px; }
.c-a { width: 400px; }
.c-b { width: 156px; }
.c-c { width: 154px; }
.c-d { width: 46px; }
.c-e { width: 394px; }
.c-f { width: 162px; }
.c-n { width: 96px; }
th { padding: 0; font-weight: 400; color: #5e5e5e; }
thead th { height: 40px; border-right: 2px solid #e2e2e2; border-bottom: 2px solid #b8b8b8; background: linear-gradient(#fff, #f5f5f5); }
thead .cur { border-bottom: 4px solid var(--green); border-right-color: #f1f1f1; background: #f1f1f1; color: var(--green); }
.corner svg { margin: 6px 0 0 8px; }
tbody tr { height: 28px; }
tbody .h30 { height: 30px; }
tbody .h32 { height: 32px; }
tbody .h34 { height: 34px; }
tbody th {
  border-right: 2px solid #b8b8b8;
  background: linear-gradient(to right, #fff0, #cfcfcf) bottom / 100% 2px no-repeat, linear-gradient(to right, #f6f6f6, #fff);
}
tbody .cur { color: var(--green); border-right-color: var(--green); background: #f1f1f1; }
td { padding: 0 0 0 4px; border-right: 2px solid var(--grid); border-bottom: 2px solid var(--grid); white-space: nowrap; }
.rest { border-right: 0; background: repeating-linear-gradient(to right, transparent 0 94px, var(--grid) 94px 96px); }
.by { border-bottom-color: #ffff54; }
.title { padding: 0 48px 0 0; background: #608bd0; border-right-color: #608bd0; border-bottom-color: #000; text-align: center; font: 700 22px/27px "Liberation Sans", sans-serif; color: #000; }
.sec { background: var(--sec); font-size: 22px; font-weight: 700; color: #000; }
.dk { background: var(--dk); }
.lt { background: var(--lt); }
.arial { font: 700 22px/24px "Liberation Sans", sans-serif; color: #000; }
.strong { font-size: 21px; font-weight: 700; color: #000; }
.num { text-align: right; padding-right: 10px; }
.sec.num, .strong.num { padding-right: 12px; font-size: 21px; }
.num.neg { padding-right: 4px; }
.bs { border-bottom-color: var(--sec); }
.bd { border-bottom-color: var(--dk); }
.bk, .box { border-bottom-color: #000; }
.rs { border-right-color: var(--sec); }
.rd { border-right-color: var(--dk); }
.rk, .box { border-right-color: #000; }
.rthick { border-right-width: 4px; }
.thick, .dbl, .active { position: relative; }
.thick::after, .dbl::after { content: ""; position: absolute; inset: -4px -2px -2px -4px; border: 4px solid #000; }
.dbl { border-bottom-color: var(--sec); border-right-color: #000; }
.dbl::after { inset: -2px -2px -4px -4px; border-top-width: 2px; border-bottom: 6px double #000; }
.active::before { content: ""; position: absolute; inset: -4px; border: 4px solid var(--green); box-shadow: inset 0 0 0 2px #fff; }
.active::after { content: ""; position: absolute; right: -8px; bottom: -8px; width: 12px; height: 12px; background: var(--green); border: solid #fff; border-width: 2px 0 0 2px; }
.note { background: #ffff54; border-color: #ffff54; font-weight: 700; color: #000; }
.endline td { position: relative; }
.endline td::after { content: ""; position: absolute; left: 0; right: -2px; bottom: -2px; height: 4px; background: #000; }
.endline .rest::after { display: none; }

/* sheet tabs */
.sheets { display: flex; height: 52px; background: #f1f1f1; border-bottom: 2px solid #a2a2a2; font-size: 23px; font-weight: 500; color: #fff; }
.arrows { display: flex; align-items: center; gap: 30px; width: 122px; height: 42px; padding: 4px 0 0 29px; border-right: 2px solid #d0d0d0; margin-right: 10px; }
.st { display: flex; height: 42px; padding: 4px 6px 0; border-right: 2px solid #d0d0d0; line-height: 38px; white-space: nowrap; }
.st span { height: 40px; padding: 0 31px; }
.long span { padding: 0 39px; }
.green span { background: #50ad5b; }
.blue span { background: #2f6ebd; }
.first span { padding-left: 20px; background: linear-gradient(to right, #f1f1f1, #50ad5b 66px); }
.current { height: 44px; background: #fff; border-radius: 0 0 8px 8px; box-shadow: 0 2px 2px #8a8a8a; font-weight: 700; color: #3f8050; position: relative; }
.current span { height: 34px; background: linear-gradient(#e9f0fa, #9cb6dc); }
.add { width: 76px; height: 42px; padding-top: 4px; justify-content: center; border-right: 2px solid #d0d0d0; }

/* status bar */
.statusbar { display: flex; align-items: center; height: 44px; padding: 0 56px 0 49px; background: linear-gradient(#e3e3e3, #d8d8d8); font-size: 24px; color: #4e4e4e; }
.ready { margin-right: 36px; }
.access { gap: 6px; }
.views { display: flex; margin-left: auto; margin-right: 16px; }
.view { display: flex; align-items: center; justify-content: center; width: 72px; height: 44px; }
.view.on { background: #a5a5a5; }
.zoom { appearance: none; width: 200px; height: 32px; margin: 0 14px; background: none; }
.zoom::-webkit-slider-runnable-track { height: 8px; border-radius: 4px; background: #9a9a9a; }
.zoom::-webkit-slider-thumb { appearance: none; width: 32px; height: 32px; margin-top: -12px; border-radius: 50%; background: #fff; box-shadow: 0 1px 3px #777; }
.percent { margin-left: 41px; font-size: 22px; }
```
